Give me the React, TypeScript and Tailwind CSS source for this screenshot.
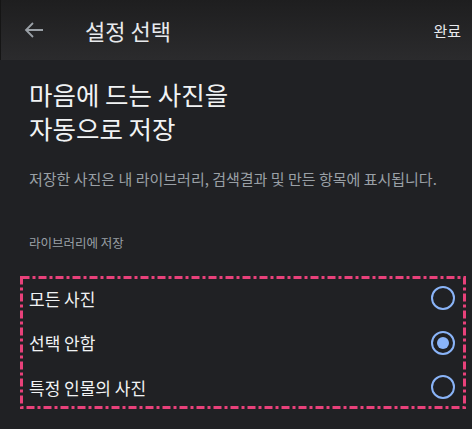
import React, { useState } from 'react';

const options = ['모든 사진', '선택 안함', '특정 인물의 사진'];

function Radio({ checked }: { checked: boolean }) {
  return (
    <div className="w-[24px] h-[24px] rounded-full border-[2px] border-[#8ab4f8] flex items-center justify-center">
      {checked && <div className="w-[12px] h-[12px] rounded-full bg-[#8ab4f8]" />}
    </div>
  );
}

export default function App() {
  const [selected, setSelected] = useState(1);
  const font = { fontFamily: '"Noto Sans CJK KR", "Noto Sans", sans-serif' };

  return (
    <div className="w-[472px] h-[429px] bg-[#202124] overflow-hidden text-[#e8eaed]" style={font}>
      {/* Header */}
      <div className="h-[60px] flex items-center bg-gradient-to-b from-[#1e1e1f] to-[#2b2b2d] border-l border-[#151515]">
        <svg className="ml-[21px]" width="24" height="24" viewBox="0 0 24 24" fill="none">
          <path d="M21 12H4M11 5l-7 7 7 7" stroke="#9aa0a6" strokeWidth="1.8" />
        </svg>
        <div className="ml-[39px] text-[22px] leading-none text-[#e8eaed]">설정 선택</div>
        <div className="ml-auto mr-[11px] text-[15px] leading-none text-[#e8eaed]">완료</div>
      </div>

      <div className="px-[29px] pt-[17px]">
        <div className="text-[25.5px] leading-[34px] text-[#f1f3f4]">마음에 드는 사진을</div>
        <div className="text-[25.5px] leading-[34px] text-[#f1f3f4]">자동으로 저장</div>
        <p className="mt-[24px] text-[15px] leading-[20px] text-[#9aa0a6] whitespace-nowrap">
          저장한 사진은 내 라이브러리, 검색결과 및 만든 항목에 표시됩니다.
        </p>
        <p className="mt-[46px] text-[12.5px] leading-[16px] text-[#9aa0a6]">라이브러리에 저장</p>
      </div>

      <div className="relative ml-[20px] mr-[6px] mt-[25px] h-[133px]">
        <svg className="absolute inset-0 pointer-events-none" width="446" height="133">
          <rect
            x="1.5"
            y="1.5"
            width="443"
            height="130"
            fill="none"
            stroke="#e8417a"
            strokeWidth="3"
            strokeDasharray="8 3 3 3"
          />
        </svg>
        <div className="flex flex-col">
          {options.map((o, i) => (
            <div
              key={o}
              onClick={() => setSelected(i)}
              className="h-[44.5px] flex items-center pl-[9px] pr-[11px] cursor-pointer"
            >
              <span className="text-[17px] leading-none text-[#f1f3f4]">{o}</span>
              <div className="ml-auto">
                <Radio checked={selected === i} />
              </div>
            </div>
          ))}
        </div>
      </div>
    </div>
  );
}
